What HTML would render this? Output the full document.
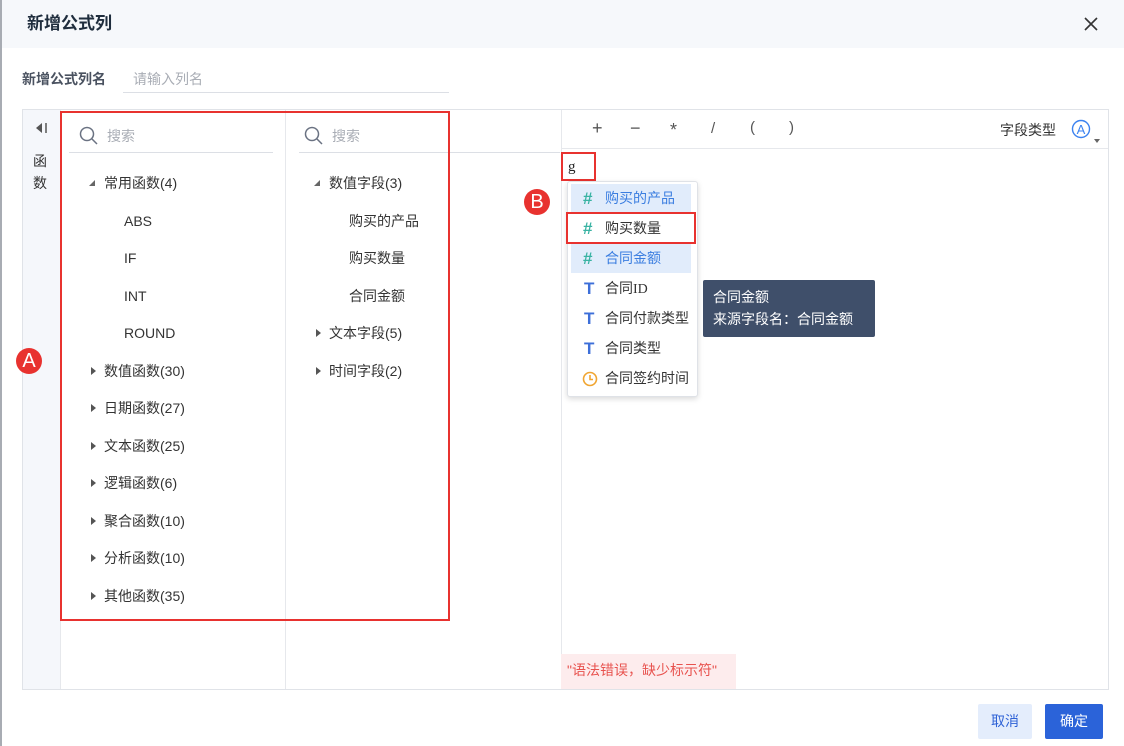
<!DOCTYPE html>
<html><head><meta charset="utf-8"><style>
*{margin:0;padding:0;box-sizing:border-box}
body{width:1124px;height:746px;background:#fff;font-family:"Liberation Sans","Noto Sans CJK SC",sans-serif;position:relative;overflow:hidden;color:#333;font-size:14px}
.a{position:absolute}
.t{position:absolute;white-space:nowrap;line-height:18px}
.tri{position:absolute;width:0;height:0}
.dn{border-left:6px solid transparent;border-bottom:6px solid #666}
.rt{border-top:4px solid transparent;border-bottom:4px solid transparent;border-left:5px solid #555}
.it{position:absolute;left:4px;width:120px;height:29px;line-height:29px;padding-left:34px;font-size:14px;color:#333}
.hash{position:absolute;left:12px;top:0;color:#3ab3a3;font-weight:bold;font-size:17px}
.T{position:absolute;left:13px;top:0;color:#3d6fd9;font-weight:bold;font-size:17px}
</style></head><body>
<div class="a" style="left:0;top:0;width:1124px;height:48px;background:#f6f8fb"></div>
<div class="a" style="left:0;top:0;width:2px;height:746px;background:#a8acb3"></div>
<div class="t" style="left:27px;top:14px;font-size:17px;font-weight:bold;color:#1f2d3d;line-height:20px">新增公式列</div>
<svg class="a" style="left:1084px;top:17px" width="14" height="14"><path d="M1 1L13 13M13 1L1 13" stroke="#333" stroke-width="1.6"/></svg>
<div class="t" style="left:22px;top:70px;font-weight:bold;color:#4a5260">新增公式列名</div>
<div class="t" style="left:133px;top:70px;color:#a9adb5">请输入列名</div>
<div class="a" style="left:123px;top:92px;width:326px;height:1px;background:#dcdfe5"></div>

<div class="a" style="left:22px;top:109px;width:1087px;height:581px;border:1px solid #e0e3e8"></div>
<div class="a" style="left:23px;top:110px;width:38px;height:579px;background:#f5f7fb;border-right:1px solid #e6e8ec"></div>
<svg class="a" style="left:35px;top:122px" width="14" height="12"><path d="M1 6L7 1V11Z" fill="#555"/><path d="M11 1V11" stroke="#555" stroke-width="1.5"/></svg>
<div class="t" style="left:33px;top:150px;color:#333;line-height:22px;width:16px;white-space:normal">函数</div>
<div class="a" style="left:285px;top:110px;width:1px;height:579px;background:#e6e8ec"></div>
<div class="a" style="left:561px;top:110px;width:1px;height:579px;background:#e6e8ec"></div>

<svg class="a" style="left:79px;top:126px" width="20" height="20"><circle cx="8" cy="8" r="6.5" fill="none" stroke="#6a7282" stroke-width="1.5"/><path d="M13 13L18 18" stroke="#6a7282" stroke-width="1.5"/></svg>
<div class="t" style="left:107px;top:127px;color:#a9adb5">搜索</div>
<div class="a" style="left:69px;top:152px;width:204px;height:1px;background:#dcdfe5"></div>
<svg class="a" style="left:304px;top:126px" width="20" height="20"><circle cx="8" cy="8" r="6.5" fill="none" stroke="#6a7282" stroke-width="1.5"/><path d="M13 13L18 18" stroke="#6a7282" stroke-width="1.5"/></svg>
<div class="t" style="left:332px;top:127px;color:#a9adb5">搜索</div>
<div class="a" style="left:299px;top:152px;width:261px;height:1px;background:#dcdfe5"></div>

<div class="tri dn" style="left:89px;top:180px"></div>
<div class="t" style="left:104px;top:174px">常用函数(4)</div>
<div class="t" style="left:124px;top:212px">ABS</div>
<div class="t" style="left:124px;top:249px">IF</div>
<div class="t" style="left:124px;top:287px">INT</div>
<div class="t" style="left:124px;top:324px">ROUND</div>
<div class="tri rt" style="left:91px;top:367px"></div><div class="t" style="left:104px;top:362px">数值函数(30)</div>
<div class="tri rt" style="left:91px;top:404px"></div><div class="t" style="left:104px;top:399px">日期函数(27)</div>
<div class="tri rt" style="left:91px;top:442px"></div><div class="t" style="left:104px;top:437px">文本函数(25)</div>
<div class="tri rt" style="left:91px;top:479px"></div><div class="t" style="left:104px;top:474px">逻辑函数(6)</div>
<div class="tri rt" style="left:91px;top:517px"></div><div class="t" style="left:104px;top:512px">聚合函数(10)</div>
<div class="tri rt" style="left:91px;top:554px"></div><div class="t" style="left:104px;top:549px">分析函数(10)</div>
<div class="tri rt" style="left:91px;top:592px"></div><div class="t" style="left:104px;top:587px">其他函数(35)</div>

<div class="tri dn" style="left:314px;top:180px"></div>
<div class="t" style="left:329px;top:174px">数值字段(3)</div>
<div class="t" style="left:349px;top:212px">购买的产品</div>
<div class="t" style="left:349px;top:249px">购买数量</div>
<div class="t" style="left:349px;top:287px">合同金额</div>
<div class="tri rt" style="left:316px;top:329px"></div><div class="t" style="left:329px;top:324px">文本字段(5)</div>
<div class="tri rt" style="left:316px;top:367px"></div><div class="t" style="left:329px;top:362px">时间字段(2)</div>

<div class="a" style="left:60px;top:111px;width:390px;height:510px;border:2px solid #e8322f"></div>

<div class="a" style="left:562px;top:148px;width:546px;height:1px;background:#e6e8ec"></div>
<div class="t" style="left:592px;top:119px;font-size:18px;color:#555">+</div>
<div class="t" style="left:630px;top:119px;font-size:18px;color:#555">−</div>
<div class="t" style="left:670px;top:121px;font-size:18px;color:#555">*</div>
<div class="t" style="left:711px;top:120px;font-size:15px;color:#555">/</div>
<div class="t" style="left:750px;top:119px;font-size:15px;color:#555">(</div>
<div class="t" style="left:789px;top:119px;font-size:15px;color:#555">)</div>
<div class="t" style="left:1000px;top:121px;color:#333">字段类型</div>
<svg class="a" style="left:1071px;top:119px" width="20" height="20"><circle cx="10" cy="10" r="8.5" fill="none" stroke="#3b82f0" stroke-width="1.4"/><text x="10" y="15" text-anchor="middle" font-size="13" fill="#3b82f0" font-family="Liberation Sans">A</text></svg>
<div class="tri" style="left:1094px;top:139px;border-left:3px solid transparent;border-right:3px solid transparent;border-top:4px solid #666"></div>

<div class="t" style="left:568px;top:158px;font-family:'Liberation Serif',serif;font-size:15px;color:#222">g</div>
<div class="a" style="left:561px;top:152px;width:35px;height:29px;border:2px solid #e8322f"></div>

<div class="a" style="left:567px;top:181px;width:131px;height:216px;background:#fff;border:1px solid #dfe2e7;border-radius:3px;box-shadow:0 2px 6px rgba(0,0,0,.15)"></div>
<div class="it" style="left:571px;top:184px;background:#e1ecfb;color:#3b7ee0"><span class="hash">#</span>购买的产品</div>
<div class="it" style="left:571px;top:214px"><span class="hash">#</span>购买数量</div>
<div class="it" style="left:571px;top:244px;background:#e1ecfb;color:#3b7ee0"><span class="hash">#</span>合同金额</div>
<div class="it" style="left:571px;top:274px"><span class="T">T</span>合同<span style="font-family:'Liberation Serif',serif">ID</span></div>
<div class="it" style="left:571px;top:304px"><span class="T">T</span>合同付款类型</div>
<div class="it" style="left:571px;top:334px"><span class="T">T</span>合同类型</div>
<div class="it" style="left:571px;top:364px"><svg class="a" style="left:11px;top:7px" width="16" height="16"><circle cx="8" cy="8" r="6.5" fill="none" stroke="#f0a531" stroke-width="1.6"/><path d="M8 4V8.5H11" fill="none" stroke="#f0a531" stroke-width="1.6"/></svg>合同签约时间</div>
<div class="a" style="left:566px;top:212px;width:130px;height:32px;border:2px solid #e8322f"></div>

<div class="a" style="left:703px;top:280px;width:172px;height:57px;background:#3f4f6a;border-radius:2px"></div>
<div class="t" style="left:713px;top:288px;color:#fff">合同金额</div>
<div class="t" style="left:713px;top:310px;color:#fff">来源字段名：合同金额</div>

<div class="a" style="left:524px;top:189px;width:26px;height:26px;border-radius:50%;background:#e8322f;color:#fff;font-size:20px;line-height:26px;text-align:center">B</div>
<div class="a" style="left:16px;top:348px;width:26px;height:26px;border-radius:50%;background:#e8322f;color:#fff;font-size:20px;line-height:26px;text-align:center">A</div>

<div class="a" style="left:561px;top:654px;width:175px;height:35px;background:#fdeced"></div>
<div class="t" style="left:567px;top:661px;color:#e8524e">"语法错误，缺少标示符"</div>

<div class="a" style="left:978px;top:704px;width:54px;height:35px;background:#e4edfc;border-radius:2px;color:#2f62d6;text-align:center;line-height:35px">取消</div>
<div class="a" style="left:1045px;top:704px;width:58px;height:35px;background:#2b63d9;border-radius:2px;color:#fff;text-align:center;line-height:35px">确定</div>
</body></html>
